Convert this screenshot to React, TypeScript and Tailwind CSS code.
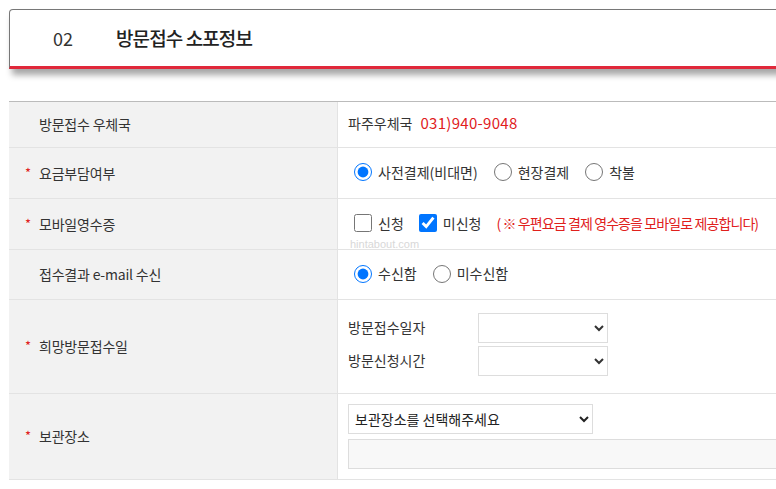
import React from "react";

const font = { fontFamily: '"Noto Sans CJK KR", "Noto Sans", sans-serif' };

function Row({ label, required, height, children }: { label: string; required?: boolean; height: string; children: React.ReactNode }) {
  return (
    <div className={`grid grid-cols-[329px_1fr] border-b border-[#e3e3e3] ${height}`}>
      <div className="flex items-center bg-[#f2f2f2] border-r border-[#e3e3e3] pl-4 text-[14px] text-[#333] tracking-[-0.2px]">
        <span className="w-[14px] text-[#e0201c] text-[13px] leading-none -mt-[2px]">{required ? "*" : ""}</span>
        <span>{label}</span>
      </div>
      <div className="relative flex flex-col justify-center pl-[10px] text-[14px] text-[#333]">{children}</div>
    </div>
  );
}

function Radio({ label, checked, name }: { label: string; checked?: boolean; name: string }) {
  return (
    <label className="flex items-center gap-[6px]">
      <input type="radio" name={name} defaultChecked={checked} className="w-[18px] h-[18px] m-0 accent-[#0075ff]" />
      <span>{label}</span>
    </label>
  );
}

function Check({ label, checked }: { label: string; checked?: boolean }) {
  return (
    <label className="flex items-center gap-[6px]">
      <input type="checkbox" defaultChecked={checked} className="w-[18px] h-[18px] m-0 accent-[#0075ff]" />
      <span>{label}</span>
    </label>
  );
}

export default function App() {
  return (
    <div className="w-[776px] h-[489px] overflow-hidden bg-white" style={font}>
      <div className="pl-[9px] pt-[9px] w-[820px]">
        <div className="h-[60px] border border-[#777] rounded-tl-[4px] border-b-[3px] border-b-[#e0283a] shadow-[3px_6px_6px_rgba(0,0,0,0.35)] flex items-center bg-white">
          <span className="pl-[43px] w-[106px] text-[18px] text-[#333]">02</span>
          <span className="text-[19px] font-medium text-[#222] tracking-[-0.9px]">방문접수 소포정보</span>
        </div>

        <div className="mt-[32px] border-t border-[#bbb]">
          <Row label="방문접수 우체국" height="h-[46px]">
            <div className="flex items-center gap-[8px] -mt-[2px]">
              <span>파주우체국</span>
              <span className="text-[15px] text-[#e0201c] tracking-[0.3px]">031)940-9048</span>
            </div>
          </Row>
          <Row label="요금부담여부" required height="h-[51px]">
            <div className="flex items-center gap-[16px] pl-[6px] -mt-[2px]">
              <Radio name="fee" label="사전결제(비대면)" checked />
              <Radio name="fee" label="현장결제" />
              <Radio name="fee" label="착불" />
            </div>
          </Row>
          <Row label="모바일영수증" required height="h-[51px]">
            <div className="flex items-center gap-[15px] pl-[6px] -mt-[2px]">
              <Check label="신청" />
              <Check label="미신청" checked />
              <span className="text-[#e0201c] text-[14px] tracking-[-0.9px]">( ※ 우편요금 결제 영수증을 모바일로 제공합니다)</span>
            </div>
            <span className="absolute left-[12px] bottom-[-3px] text-[11px] text-[#d8d8d8]" style={{ fontFamily: '"Liberation Sans", sans-serif' }}>hintabout.com</span>
          </Row>
          <Row label="접수결과 e-mail 수신" height="h-[50px]">
            <div className="flex items-center gap-[16px] pl-[6px] -mt-[2px]">
              <Radio name="mail" label="수신함" checked />
              <Radio name="mail" label="미수신함" />
            </div>
          </Row>
          <Row label="희망방문접수일" required height="h-[94px]">
            <div className="flex flex-col gap-[3px] -mt-[5px]">
              <div className="flex items-center">
                <span className="w-[130px]">방문접수일자</span>
                <select className="w-[130px] h-[30px] border border-[#ddd] bg-white"></select>
              </div>
              <div className="flex items-center">
                <span className="w-[130px]">방문신청시간</span>
                <select className="w-[130px] h-[30px] border border-[#ddd] bg-white"></select>
              </div>
            </div>
          </Row>
          <Row label="보관장소" required height="h-[86px]">
            <div className="flex flex-col gap-[5px]">
              <select className="w-[245px] h-[30px] border border-[#ddd] bg-white text-[14px] text-[#222] pl-[2px]">
                <option>보관장소를 선택해주세요</option>
              </select>
              <div className="h-[30px] border border-[#ddd] bg-[#f8f8f8]"></div>
            </div>
          </Row>
        </div>
      </div>
    </div>
  );
}
